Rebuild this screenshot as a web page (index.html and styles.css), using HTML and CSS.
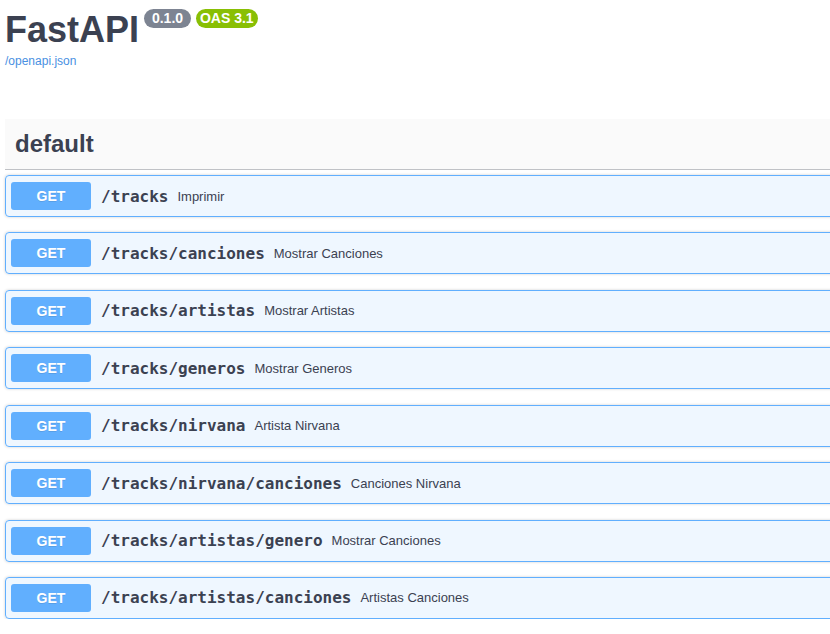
FILE: index.html
```html
<!DOCTYPE html>
<html lang="en">
<head>
<meta charset="utf-8">
<title>FastAPI - Swagger UI</title>
<link rel="stylesheet" href="styles.css">
</head>
<body>
<div class="wrapper">
  <div class="info">
    <div class="title-row">
      <h2 class="title">FastAPI</h2>
      <span class="badge badge-version"><pre class="version"> 0.1.0 </pre></span>
      <span class="badge badge-oas"><pre class="version">OAS 3.1</pre></span>
    </div>
    <a class="spec-link" href="#">/openapi.json</a>
  </div>

  <div class="tag-section">
    <h3 class="tag-header">default</h3>
    <div class="ops">
      <div class="opblock"><span class="method">GET</span><span class="path">/tracks</span><span class="desc">Imprimir</span></div>
      <div class="opblock"><span class="method">GET</span><span class="path">/tracks/canciones</span><span class="desc">Mostrar Canciones</span></div>
      <div class="opblock"><span class="method">GET</span><span class="path">/tracks/artistas</span><span class="desc">Mostrar Artistas</span></div>
      <div class="opblock"><span class="method">GET</span><span class="path">/tracks/generos</span><span class="desc">Mostrar Generos</span></div>
      <div class="opblock"><span class="method">GET</span><span class="path">/tracks/nirvana</span><span class="desc">Artista Nirvana</span></div>
      <div class="opblock"><span class="method">GET</span><span class="path">/tracks/nirvana/canciones</span><span class="desc">Canciones Nirvana</span></div>
      <div class="opblock"><span class="method">GET</span><span class="path">/tracks/artistas/genero</span><span class="desc">Mostrar Canciones</span></div>
      <div class="opblock"><span class="method">GET</span><span class="path">/tracks/artistas/canciones</span><span class="desc">Artistas Canciones</span></div>
    </div>
  </div>
</div>
</body>
</html>
```

FILE: styles.css
```css
html, body {
  margin: 0;
  padding: 0;
  overflow: hidden;
  background: #fff;
}

body {
  font-family: "Liberation Sans", Arial, sans-serif;
  color: #3b4151;
}

.wrapper {
  width: 1200px;
  padding: 0 0 0 5px;
}

.info {
  padding-top: 9px;
}

.title-row {
  display: flex;
  align-items: flex-start;
}

.title {
  margin: 0;
  font-size: 36px;
  line-height: 41px;
  font-weight: 700;
  color: #3b4151;
}

.badge {
  display: inline-block;
  margin-left: 5px;
  padding: 2px 4px;
  border-radius: 57px;
  background: #7d8492;
}

.badge-oas {
  background: #89bf04;
}

.version {
  margin: 0;
  font-family: "Liberation Sans", Arial, sans-serif;
  font-size: 14px;
  line-height: 15px;
  font-weight: 700;
  color: #fff;
  white-space: pre;
}

.spec-link {
  display: inline-block;
  margin-top: 4px;
  font-size: 12px;
  line-height: 14px;
  color: #4990e2;
  text-decoration: none;
}

.tag-section {
  margin-top: 50px;
}

.tag-header {
  margin: 0 0 5px;
  height: 50px;
  padding: 0 10px;
  display: flex;
  align-items: center;
  background: #fafafa;
  border-bottom: 1px solid rgba(59, 65, 81, 0.3);
  font-size: 24px;
  font-weight: 700;
  color: #3b4151;
}

.ops {
  display: flex;
  flex-direction: column;
  gap: 15.43px;
}

.opblock {
  display: flex;
  align-items: center;
  padding: 6px 5px;
  border: 1px solid #61affe;
  border-radius: 4px;
  background: rgba(97, 175, 254, 0.1);
  box-shadow: 0 0 3px rgba(0, 0, 0, 0.19);
}

.method {
  display: flex;
  align-items: center;
  justify-content: center;
  width: 80px;
  height: 28px;
  border-radius: 3px;
  background: #61affe;
  color: #fff;
  font-size: 14px;
  font-weight: 700;
  text-shadow: 0 1px 0 rgba(0, 0, 0, 0.1);
}

.path {
  padding: 0 9px 0 10px;
  font-family: "DejaVu Sans Mono", monospace;
  font-size: 16px;
  font-weight: 700;
  color: #3b4151;
}

.desc {
  font-size: 13px;
  color: #3b4151;
}
```
